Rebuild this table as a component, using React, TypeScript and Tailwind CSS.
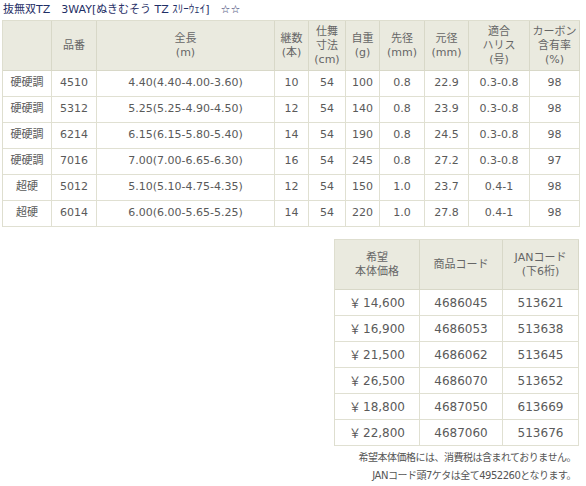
const font = { fontFamily: '"DejaVu Sans", "Noto Sans CJK JP", sans-serif' };

const specRows = [
  ['硬硬調', '4510', '4.40(4.40-4.00-3.60)', '10', '54', '100', '0.8', '22.9', '0.3-0.8', '98'],
  ['硬硬調', '5312', '5.25(5.25-4.90-4.50)', '12', '54', '140', '0.8', '23.9', '0.3-0.8', '98'],
  ['硬硬調', '6214', '6.15(6.15-5.80-5.40)', '14', '54', '190', '0.8', '24.5', '0.3-0.8', '98'],
  ['硬硬調', '7016', '7.00(7.00-6.65-6.30)', '16', '54', '245', '0.8', '27.2', '0.3-0.8', '97'],
  ['超硬', '5012', '5.10(5.10-4.75-4.35)', '12', '54', '150', '1.0', '23.7', '0.4-1', '98'],
  ['超硬', '6014', '6.00(6.00-5.65-5.25)', '14', '54', '220', '1.0', '27.8', '0.4-1', '98'],
];

const specHead: string[][] = [
  [],
  ['品番'],
  ['全長', '(m)'],
  ['継数', '(本)'],
  ['仕舞', '寸法', '(cm)'],
  ['自重', '(g)'],
  ['先径', '(mm)'],
  ['元径', '(mm)'],
  ['適合', 'ハリス', '(号)'],
  ['カーボン', '含有率', '(%)'],
];

const priceRows = [
  ['14,600', '4686045', '513621'],
  ['16,900', '4686053', '513638'],
  ['21,500', '4686062', '513645'],
  ['26,500', '4686070', '513652'],
  ['18,800', '4687050', '613669'],
  ['22,800', '4687060', '513676'],
];

const priceHead = [['希望', '本体価格'], ['商品コード'], ['JANコード', '(下6桁)']];

function HeadCell({ lines }: { lines: string[] }) {
  return (
    <div className="h-[50px] flex flex-col items-center justify-center border-r border-b border-[#d8d8c8] bg-[#eaeadf] text-[11px] leading-[14px] text-[#666]">
      {lines.map((l, i) => (
        <span key={i} className="whitespace-nowrap">{l}</span>
      ))}
    </div>
  );
}

export default function App() {
  return (
    <div className="w-[586px] h-[486px] bg-white text-[#5a5a5a]" style={font}>
      <div className="h-5 pl-[3px] flex items-center text-[11px] text-[#1f2f66] whitespace-nowrap">
        抜無双TZ　3WAY[ぬきむそう TZ ｽﾘｰｳｪｲ]　<span className="font-bold">☆☆</span>
      </div>

      <div className="ml-[2px] w-[578px] grid grid-cols-[49px_45px_178px_34px_37px_34px_45px_44px_61px_50px] border-l border-t border-[#dedecf]">
        {specHead.map((lines, i) => (
          <HeadCell key={i} lines={lines} />
        ))}
        {specRows.map((row, r) =>
          row.map((cell, c) => (
            <div
              key={r + '-' + c}
              className="h-[26px] flex items-center justify-center border-r border-b border-[#e0e0d2] text-[11px] whitespace-nowrap"
            >
              {cell}
            </div>
          ))
        )}
      </div>

      <div className="mt-3 ml-[334px] w-[245px] grid grid-cols-[85px_83px_76px] border-l border-t border-[#dedecf]">
        {priceHead.map((lines, i) => (
          <HeadCell key={i} lines={lines} />
        ))}
        {priceRows.map((row, r) =>
          row.map((cell, c) => (
            <div
              key={r + '-' + c}
              className="h-[26px] flex items-center justify-center border-r border-b border-[#e0e0d2] text-[12px] whitespace-nowrap"
            >
              {c === 0 && <span className="mr-[2px] text-[12px]" style={{ fontFamily: '"Noto Sans CJK JP", sans-serif' }}>￥</span>}
              {cell}
            </div>
          ))
        )}
      </div>

      <div className="w-[580px] pr-[4px] pt-[3px] text-right text-[10px] leading-[18px] tracking-[-0.5px] text-[#555]">
        <p>希望本体価格には、消費税は含まれておりません。</p>
        <p>JANコード頭7ケタは全て4952260となります。</p>
      </div>
    </div>
  );
}
